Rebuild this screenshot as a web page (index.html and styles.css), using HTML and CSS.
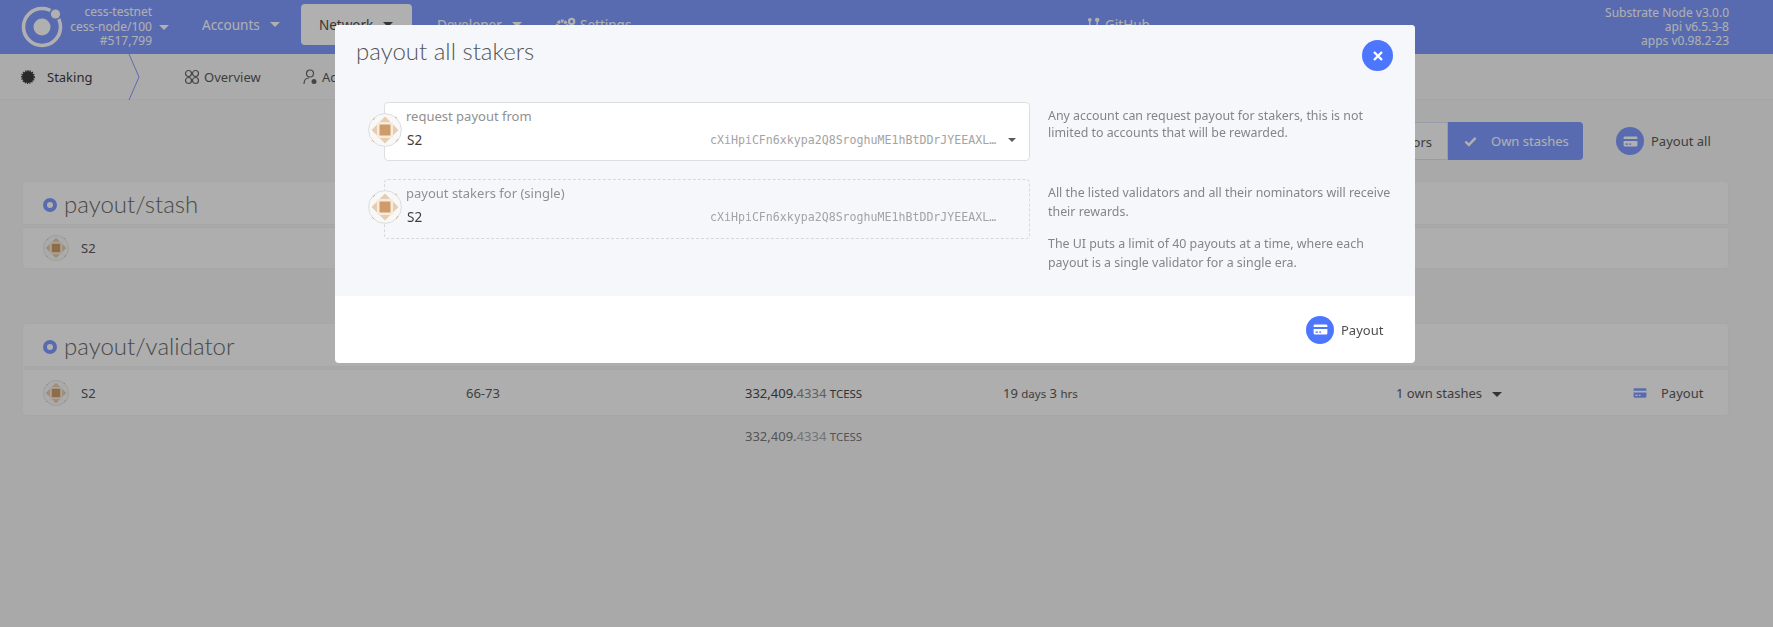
FILE: index.html
```html
<!DOCTYPE html>
<html lang="en">
<head>
<meta charset="utf-8">
<title>payout all stakers</title>
<link rel="stylesheet" href="styles.css">
</head>
<body>
<svg class="defs" width="0" height="0" aria-hidden="true">
  <defs>
    <symbol id="avatar" viewBox="0 0 34 34">
      <circle cx="17" cy="17" r="16.4" fill="#f8f8f8" stroke="#ddd" stroke-width="1"/>
      <polygon points="17,3.5 30.5,17 17,30.5 3.5,17" fill="#e8ccb0"/>
      <rect x="9" y="9" width="16" height="16" fill="#f5ecdf"/>
      <rect x="11.5" y="11.5" width="11" height="11" fill="#cf9c68"/>
      <path d="M5 7l2-2M29 5l-2 -1M4 27l2 2M28 29l2-3" stroke="#dcb48c" stroke-width="1" fill="none"/>
    </symbol>
    <symbol id="card" viewBox="0 0 24 24">
      <path fill="currentColor" d="M3 4h18a2 2 0 0 1 2 2v2H1V6a2 2 0 0 1 2-2zM1 11h22v7a2 2 0 0 1-2 2H3a2 2 0 0 1-2-2zm3 4v2h4v-2zm6 0v2h3v-2z"/>
    </symbol>
  </defs>
</svg>

<header class="topbar">
  <svg class="logo" viewBox="0 0 42 42" aria-hidden="true">
    <circle cx="21" cy="21" r="18.5" fill="none" stroke="#fff" stroke-width="3.6"/>
    <circle cx="21" cy="21" r="8.5" fill="#fff"/>
    <circle cx="34.5" cy="8" r="6.2" fill="#829cff"/>
    <circle cx="34.5" cy="8" r="4.6" fill="#fff"/>
  </svg>
  <div class="chain">
    <div>cess-testnet</div>
    <div>cess-node/100</div>
    <div>#517,799</div>
  </div>
  <span class="caret chain-caret"></span>
  <nav class="menu">
    <a class="menu-item accounts">Accounts<span class="caret"></span></a>
    <a class="menu-item network">Network<span class="caret dark"></span></a>
    <a class="menu-item developer">Developer<span class="caret"></span></a>
    <a class="menu-item settings">
      <svg class="gear" viewBox="0 0 24 18" aria-hidden="true"><circle cx="8" cy="10" r="5.5" fill="none" stroke="#fff" stroke-width="3.5" stroke-dasharray="3 1"/><circle cx="19" cy="5" r="3" fill="none" stroke="#fff" stroke-width="2.5"/></svg>Settings</a>
    <a class="menu-item github">
      <svg class="fork" viewBox="0 0 14 16" aria-hidden="true"><circle cx="3" cy="3" r="2" fill="#fff"/><circle cx="11" cy="3" r="2.4" fill="#fff"/><path d="M3 4v11M11 4v5" stroke="#fff" stroke-width="1.6"/></svg>GitHub</a>
  </nav>
  <div class="versions">
    <div>Substrate Node v3.0.0</div>
    <div>api v6.5.3-8</div>
    <div>apps v0.98.2-23</div>
  </div>
</header>

<div class="subnav">
  <svg class="star" viewBox="0 0 16 16" aria-hidden="true"><circle cx="8" cy="8" r="6.8" fill="#3c3c3c"/><circle cx="8" cy="8" r="7.2" fill="none" stroke="#3c3c3c" stroke-width="1.6" stroke-dasharray="1.4 1.3"/></svg>
  <span class="sub-title">Staking</span>
  <svg class="chevron" viewBox="0 0 12 46" aria-hidden="true"><path d="M1 0l10 23L1 46" fill="none" stroke="#829cff" stroke-width="1"/></svg>
  <a class="tab overview">
    <svg class="tab-icon" viewBox="0 0 16 16" aria-hidden="true"><g fill="none" stroke="#666" stroke-width="1.2"><circle cx="4.5" cy="4.5" r="3"/><circle cx="11.5" cy="4.5" r="3"/><circle cx="4.5" cy="11.5" r="3"/><circle cx="11.5" cy="11.5" r="3"/></g></svg>Overview</a>
  <a class="tab">
    <svg class="tab-icon" viewBox="0 0 16 16" aria-hidden="true"><g fill="none" stroke="#666" stroke-width="1.2"><circle cx="8" cy="4.5" r="3.5"/><path d="M2 15c0-4 2-6 5-6"/></g><circle cx="12" cy="12.5" r="2.5" fill="#666"/></svg>Accounts</a>
</div>

<main class="content">
  <div class="actions">
    <div class="toggle">
      <span class="toggle-off">Own validators</span>
      <span class="toggle-on">
        <svg class="check" viewBox="0 0 14 11" aria-hidden="true"><path d="M1.5 5.5l3.7 3.7 7.3-7.6" fill="none" stroke="#fff" stroke-width="2.6"/></svg>
        Own stashes
      </span>
    </div>
    <span class="payout-all">
      <span class="round dimmed"><svg class="round-icon" aria-hidden="true"><use href="#card"/></svg></span>
      Payout all
    </span>
  </div>

  <section class="card first">
    <h2 class="card-head"><span class="dot"></span>payout/stash</h2>
    <div class="row short">
      <svg class="row-avatar" aria-hidden="true"><use href="#avatar"/></svg>
      <span class="row-name">S2</span>
    </div>
  </section>

  <section class="card">
    <h2 class="card-head"><span class="dot"></span>payout/validator</h2>
    <div class="row tall">
      <div class="name-cell">
        <svg class="row-avatar" aria-hidden="true"><use href="#avatar"/></svg>
        <span class="row-name">S2</span>
      </div>
      <span>66-73</span>
      <span class="amount">332,409<b>.</b><i>4334</i> <small>TCESS</small></span>
      <span>19 <small>days</small> 3 <small>hrs</small></span>
      <span class="stashes">1 own stashes<span class="caret dark"></span></span>
      <span class="row-pay"><svg class="row-card" aria-hidden="true"><use href="#card"/></svg>Payout</span>
    </div>
  </section>
  <div class="total">
    <span></span><span></span>
    <span class="amount faded">332,409<b>.</b><i>4334</i> <small>TCESS</small></span>
  </div>
</main>

<div class="overlay"></div>

<div class="modal" role="dialog">
  <div class="modal-body">
    <div class="modal-head">
      <h1 class="modal-title">payout all stakers</h1>
      <button class="close" aria-label="close">
        <svg viewBox="0 0 12 12" aria-hidden="true"><path d="M2 2l8 8M10 2l-8 8" stroke="#fff" stroke-width="2.4"/></svg>
      </button>
    </div>
    <div class="form-row">
      <div class="field">
        <svg class="field-avatar" aria-hidden="true"><use href="#avatar"/></svg>
        <label class="field-label">request payout from</label>
        <div class="field-value">
          <span class="field-name">S2</span>
          <span class="address">cXiHpiCFn6xkypa2Q8SroghuME1hBtDDrJYEEAXL…</span>
          <span class="caret field-caret"></span>
        </div>
      </div>
      <div class="help"><p>Any account can request payout for stakers, this is not limited to accounts that will be rewarded.</p></div>
    </div>
    <div class="form-row second">
      <div class="field disabled">
        <svg class="field-avatar" aria-hidden="true"><use href="#avatar"/></svg>
        <label class="field-label">payout stakers for (single)</label>
        <div class="field-value">
          <span class="field-name">S2</span>
          <span class="address">cXiHpiCFn6xkypa2Q8SroghuME1hBtDDrJYEEAXL…</span>
          <span class="caret field-caret hidden"></span>
        </div>
      </div>
      <div class="help tall-help">
        <p>All the listed validators and all their nominators will receive their rewards.</p>
        <p>The UI puts a limit of 40 payouts at a time, where each payout is a single validator for a single era.</p>
      </div>
    </div>
  </div>
  <div class="modal-foot">
    <span class="round"><svg class="round-icon" aria-hidden="true"><use href="#card"/></svg></span>
    <span class="foot-label">Payout</span>
  </div>
</div>
</body>
</html>
```

FILE: styles.css
```css
* { box-sizing: border-box; }
html, body { margin: 0; height: 100%; }
body {
  background: #f5f5f6;
  color: #5a5a5a;
  font-family: "Noto Sans", "Open Sans", sans-serif;
  font-size: 13px;
  overflow: hidden;
}
.defs { position: absolute; }

.caret {
  display: inline-block;
  width: 0;
  height: 0;
  border-left: 5px solid transparent;
  border-right: 5px solid transparent;
  border-top: 5px solid #fff;
  vertical-align: middle;
}
.caret.dark { border-top-color: #4e4e4e; }

/* top bar */
.topbar {
  height: 54px;
  background: #829cff;
  color: #fff;
  display: flex;
  align-items: center;
  padding-left: 21px;
  font-size: 13px;
}
.logo { width: 42px; height: 42px; flex: none; }
.chain {
  width: 89px;
  text-align: right;
  line-height: 14.5px;
  font-size: 12px;
}
.chain-caret { margin-left: 7px; }
.menu {
  display: flex;
  align-items: center;
  flex: 1;
  margin-left: 33px;
  height: 100%;
  padding-bottom: 5px;
  font-size: 13.5px;
}
.menu-item { display: flex; align-items: center; }
.menu-item .caret { margin-left: 10px; }
.accounts { width: 99px; }
.network {
  width: 111px;
  height: 41px;
  padding-left: 18px;
  margin-right: 25px;
  background: #fff;
  color: #4e4e4e;
  border-radius: 4px;
}
.developer { width: 118px; }
.settings { width: 532px; }
.gear { width: 21px; height: 16px; margin-right: 4px; }
.fork { width: 13px; height: 15px; margin-right: 5px; }
.versions {
  text-align: right;
  padding-right: 44px;
  line-height: 14px;
  font-size: 12px;
}

/* sub navigation */
.subnav {
  height: 46px;
  background: #f8f8f8;
  border-bottom: 1px solid #f0f0f0;
  display: flex;
  align-items: center;
  padding-left: 21px;
  font-size: 13px;
}
.star { width: 14px; height: 14px; }
.sub-title { margin-left: 12px; width: 81px; color: #3c3c3c; }
.chevron { width: 12px; height: 46px; }
.tab { display: flex; align-items: center; }
.overview { margin-left: 44px; width: 118px; }
.tab-icon { width: 16px; height: 16px; margin-right: 4px; }

/* page content */
.content { padding: 22px 44px 0 22px; }
.actions {
  display: flex;
  justify-content: flex-end;
  align-items: center;
  height: 38px;
}
.toggle {
  display: flex;
  align-items: stretch;
  height: 38px;
  margin-right: 33px;
  line-height: 38px;
}
.toggle-off { padding: 0 15px; background: #fcfcfc; border: 1px solid #dde2f5; }
.toggle-on {
  width: 135px;
  padding-left: 16px;
  background: #829cff;
  color: #fff;
  border-radius: 0 4px 4px 0;
  display: flex;
  align-items: center;
  gap: 14px;
}
.check { width: 13px; height: 11px; }
.payout-all { display: flex; align-items: center; gap: 7px; width: 113px; font-size: 13px; }
.round {
  width: 28px;
  height: 28px;
  border-radius: 50%;
  background: #4d76ff;
  color: #fff;
  display: inline-flex;
  align-items: center;
  justify-content: center;
  flex: none;
}
.round.dimmed { background: #829cff; }
.round-icon { width: 15px; height: 15px; }

.card.first { margin: 21px 0 54px; }
.card-head {
  margin: 0 0 2px;
  height: 44px;
  background: #fcfcfc;
  border: 1px solid #f2f2f2;
  border-radius: 4px 4px 0 0;
  display: flex;
  align-items: center;
  padding-left: 20px;
  font-size: 24px;
  font-weight: 300;
  font-family: "Lato", "Open Sans", sans-serif;
  color: #6a6a6a;
}
.dot {
  width: 14px;
  height: 14px;
  border: 4px solid #829cff;
  border-radius: 50%;
  background: #fff;
  margin-right: 7px;
  margin-top: 3px;
}
.row {
  background: #fcfcfc;
  border: 1px solid #f2f2f2;
  border-radius: 0 0 4px 4px;
  padding-left: 20px;
}
.row.short { height: 42px; display: flex; align-items: center; }
.row.tall, .total {
  display: grid;
  grid-template-columns: 423px 279px 258px 393px 237px 1fr;
  align-items: center;
}
.row.tall { height: 47px; }
.name-cell { display: flex; align-items: center; }
.row-avatar { width: 26px; height: 26px; flex: none; }
.row-name { margin-left: 12px; }
.amount { color: #4a4a4a; }
.amount b { font-weight: 400; }
.amount i { font-style: normal; color: #8a8a8a; }
small { font-size: 11.5px; }
.amount.faded { color: #7a7a7a; }
.amount.faded i { color: #a8a8a8; }
.stashes .caret { margin-left: 10px; }
.row-pay { display: flex; align-items: center; gap: 14px; }
.row-card { width: 14px; height: 14px; color: #829cff; }
.total { height: 40px; padding-left: 21px; }

/* modal */
.overlay {
  position: fixed;
  inset: 0;
  background: rgba(0, 0, 0, 0.31);
}
.modal {
  position: absolute;
  left: 335px;
  top: 25px;
  width: 1080px;
  height: 338px;
  background: #fff;
  border-radius: 4px;
  display: flex;
  flex-direction: column;
}
.modal-body {
  height: 271px;
  background: #f5f7fb;
  border-radius: 4px 4px 0 0;
  padding: 0 19px 0 49px;
}
.modal-head {
  height: 77px;
  margin-left: -28px;
  display: flex;
  align-items: flex-start;
  justify-content: space-between;
}
.modal-title {
  margin: 11px 0 0;
  font-size: 24px;
  font-weight: 300;
  font-family: "Lato", "Open Sans", sans-serif;
  color: #555;
}
.close {
  width: 31px;
  height: 31px;
  margin: 15px 3px 0 0;
  padding: 0;
  border: 0;
  border-radius: 50%;
  background: #4d76ff;
  display: flex;
  align-items: center;
  justify-content: center;
}
.close svg { width: 12px; height: 12px; }
.form-row { display: flex; }
.form-row.second { margin-top: 18px; }
.field {
  position: relative;
  width: 646px;
  height: 59px;
  flex: none;
  background: #fff;
  border: 1px solid #dedede;
  border-radius: 4px;
  padding: 4px 0 0 21px;
}
.field.disabled {
  height: 60px;
  background: transparent;
  border: 1px dashed #d8d8d8;
}
.field-avatar {
  position: absolute;
  left: -17px;
  top: 10px;
  width: 34px;
  height: 34px;
}
.field-label { display: block; font-size: 13px; line-height: 18px; color: #909090; }
.field-value { display: flex; align-items: center; margin-top: 5px; line-height: 20px; }
.field-name { flex: none; width: 303px; margin-left: 1px; color: #3c3c3c; font-size: 13.5px; }
.address {
  flex: none;
  width: 287px;
  font-family: "DejaVu Sans Mono", "Liberation Mono", monospace;
  font-size: 11.6px;
  color: #a3a3a3;
  white-space: nowrap;
  overflow: hidden;
}
.field-caret { margin-left: 11px; border-left-width: 4px; border-right-width: 4px; border-top: 4px solid #5a5a5a; }
.field-caret.hidden { visibility: hidden; }
.help {
  margin-left: 18px;
  width: 350px;
  color: #858585;
  font-size: 12.4px;
  line-height: 17px;
  padding-top: 5px;
}
.help p { margin: 0; }
.tall-help { padding-top: 4px; line-height: 19px; }
.tall-help p + p { margin-top: 13px; }
.modal-foot {
  flex: 1;
  display: flex;
  align-items: center;
  padding-left: 971px;
  gap: 7px;
}
.foot-label { font-size: 13px; color: #4e4e4e; }
```
